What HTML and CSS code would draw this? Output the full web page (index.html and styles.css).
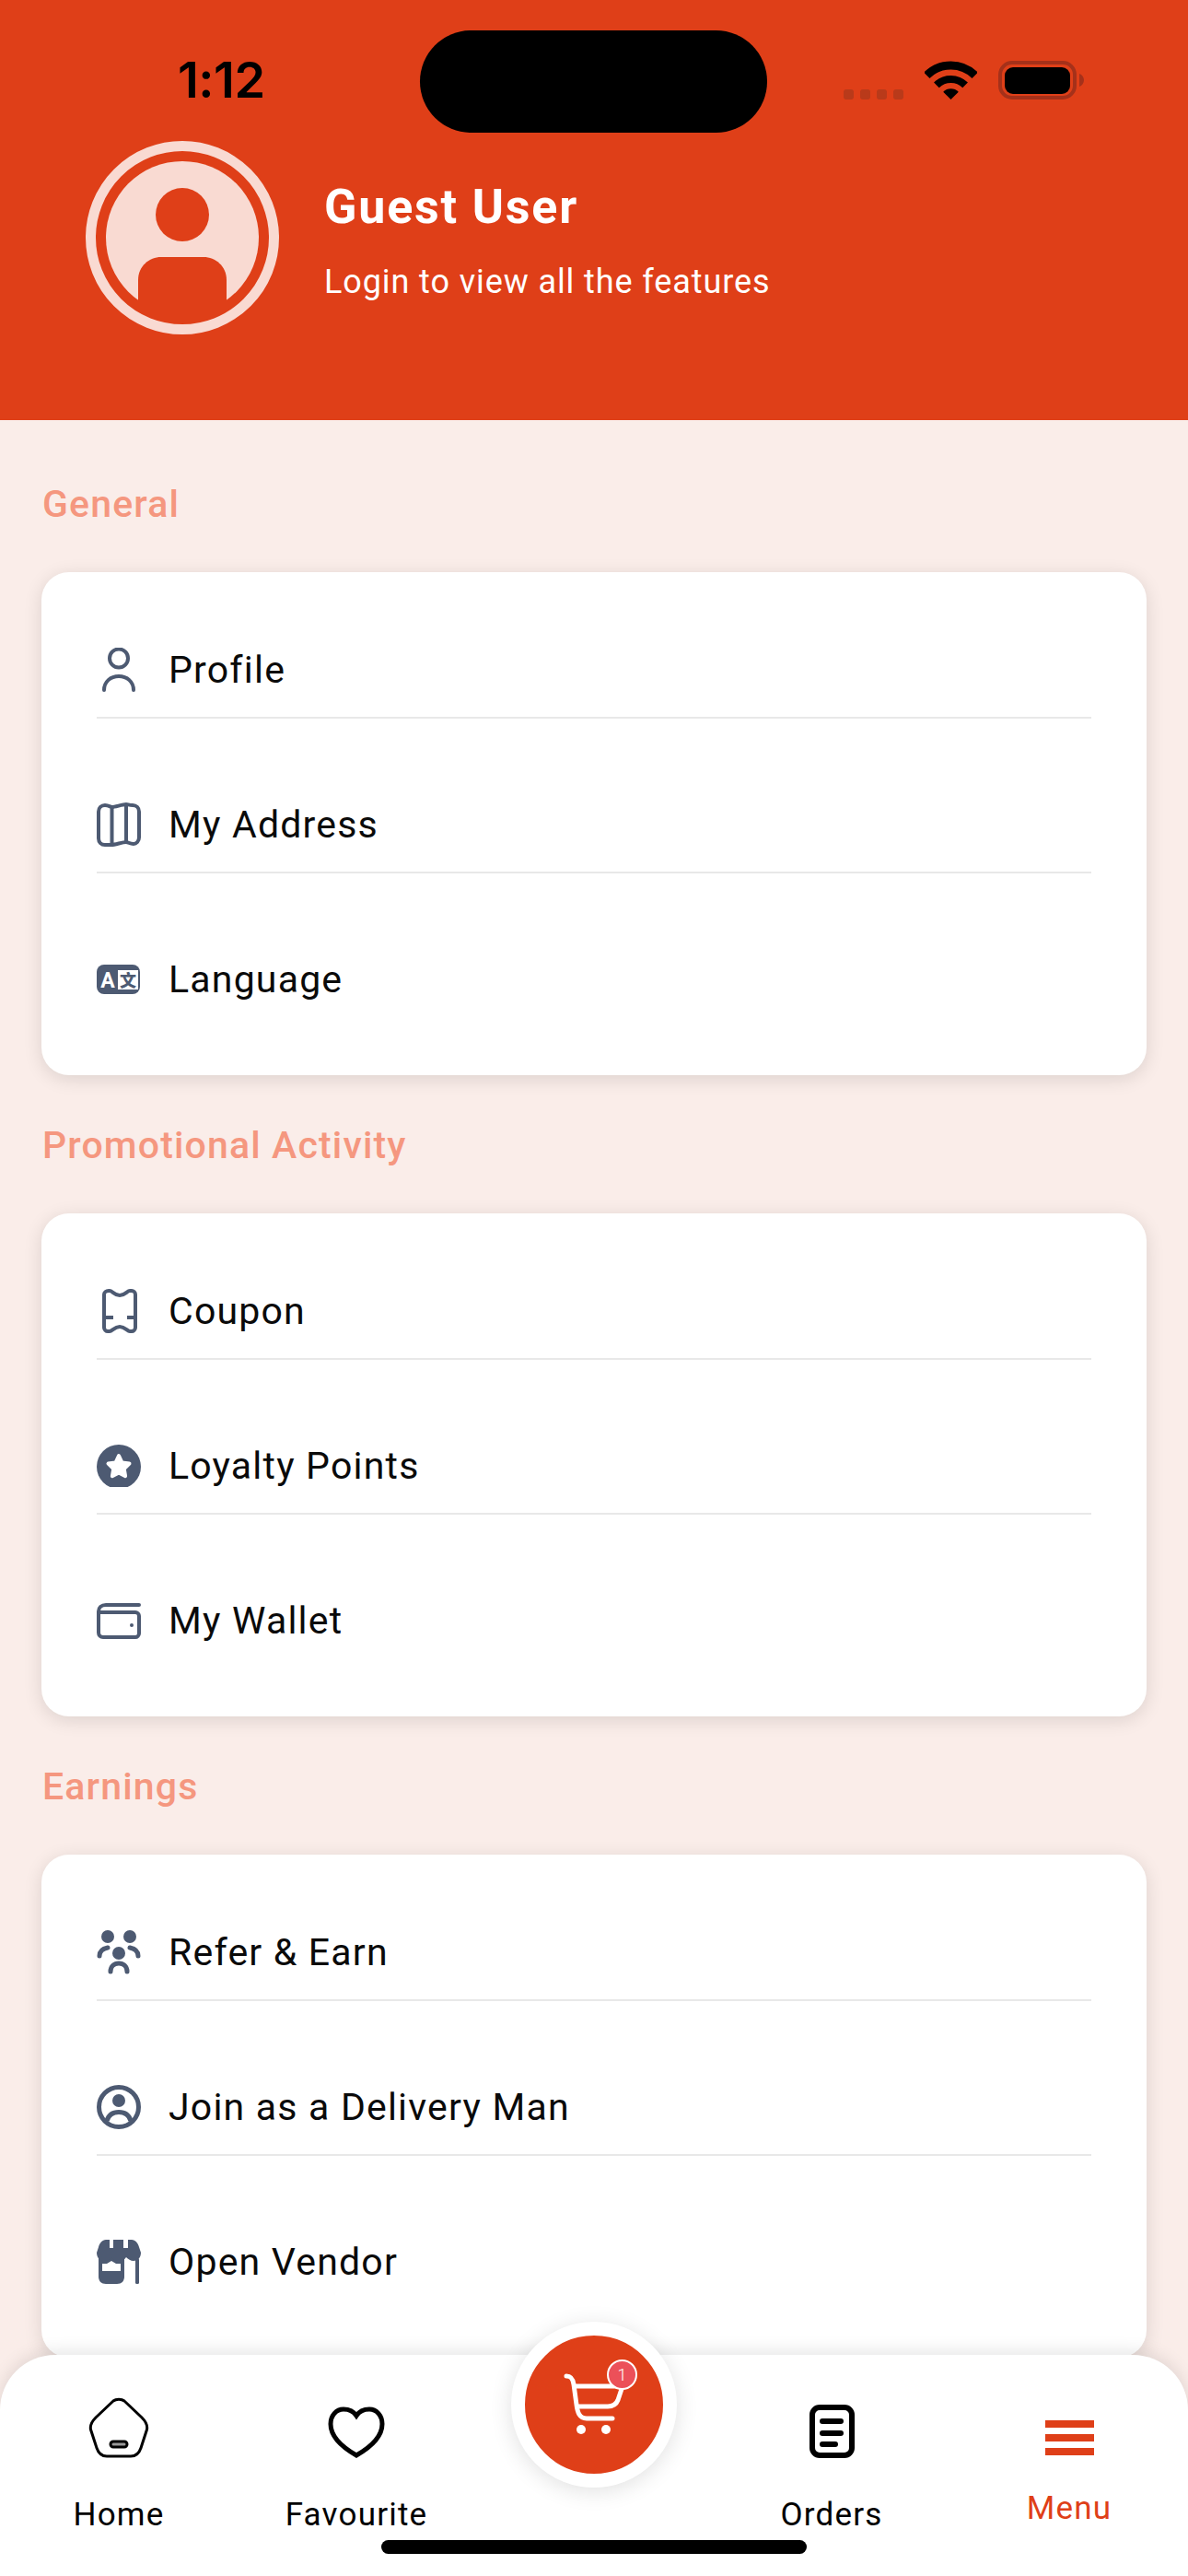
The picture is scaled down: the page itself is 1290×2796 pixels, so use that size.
FILE: index.html
```html
<!DOCTYPE html>
<html lang="en">
<head>
  <meta charset="UTF-8" />
  <meta name="viewport" content="width=device-width, initial-scale=1.0" />
  <title>Menu</title>
  <link rel="stylesheet" href="styles.css">
</head>
<body>

  <!-- Header -->
  <header class="header">
    <div class="status-bar">
      <span class="time">1:12</span>
      <div class="island"></div>
      <div class="status-icons">
        <div class="signal"><i></i><i></i><i></i><i></i></div>
        <svg class="wifi" width="57" height="42" viewBox="0 0 57 42">
          <path d="M2.3 15.8A37 37 0 0 1 54.7 15.8" fill="none" stroke="#000" stroke-width="9" />
          <path d="M12.9 26.4A22 22 0 0 1 44.1 26.4" fill="none" stroke="#000" stroke-width="8" />
          <path d="M28.5 42L20.2 33.7A11.7 11.7 0 0 1 36.8 33.7Z" />
        </svg>
        <svg class="battery" width="94" height="42" viewBox="0 0 94 42">
          <rect x="2" y="2" width="81" height="38" rx="13" fill="none" stroke="#A5311A" stroke-width="4" />
          <rect x="7" y="7" width="71" height="29" rx="9" />
          <path d="M88 14C91 15 93 18 93 21S91 27 88 28Z" fill="#A5311A" />
        </svg>
      </div>
    </div>

    <div class="profile">
      <svg class="avatar" width="210" height="210" viewBox="0 0 210 210">
        <circle cx="105" cy="105" r="83" fill="#F9DAD2" />
        <circle cx="105" cy="80" r="29" fill="#DF3F18" />
        <path d="M57 196V151C57 136 69 126 82 126H128C141 126 153 136 153 151V196Z" fill="#DF3F18" />
        <circle cx="105" cy="105" r="99.5" fill="none" stroke="#F9DAD2" stroke-width="11" />
      </svg>
      <div class="profile-text">
        <div class="profile-name">Guest User</div>
        <div class="profile-sub">Login to view all the features</div>
      </div>
    </div>
  </header>

  <main class="content">
    <!-- General -->
    <h2 class="section-title">General</h2>
    <section class="card">
      <div class="row">
        <svg class="icon" width="48" height="48" viewBox="0 0 48 48" fill="none" stroke="#4D5A72" stroke-width="4" stroke-linecap="round">
          <circle cx="24" cy="11.5" r="10" />
          <path d="M8 46C8 37 15 31 24 31S40 37 40 46" />
        </svg>
        <span>Profile</span>
      </div>
      <div class="row">
        <svg class="icon" width="48" height="48" viewBox="0 0 48 48" fill="none" stroke="#4D5A72" stroke-width="4" stroke-linejoin="round">
          <path d="M9 3C13 3 15 5 16.5 5C20 5 28 2 32 2C34 2 35 3 39 3C43 3 46 6 46 10V38C46 42 43 45 40 45C36 45 34 43 32 43C28 43 20 46 16 46H9C5 46 2 43 2 39V10C2 6 5 3 9 3Z" />
          <path d="M16.5 5V46M32 2V43" />
        </svg>
        <span>My Address</span>
      </div>
      <div class="row row-last">
        <svg class="icon" width="48" height="32" viewBox="0 0 48 32">
          <rect width="47" height="32" rx="8" fill="#4D5A72" />
          <rect x="23" y="6" width="22" height="21" fill="#fff" />
          <text class="lang-a" x="12" y="25">A</text>
          <text class="lang-b" x="34" y="23.5">文</text>
        </svg>
        <span>Language</span>
      </div>
    </section>

    <!-- Promotional Activity -->
    <h2 class="section-title">Promotional Activity</h2>
    <section class="card">
      <div class="row">
        <svg class="icon" width="48" height="48" viewBox="0 0 48 48" fill="none" stroke="#4D5A72" stroke-width="4">
          <path d="M13 2H14C17 2 19 7 25 7C31 7 33 2 36 2H38C40 2 42 4 42 6V42C42 44 40 46 38 46H36C33 46 31 41 25 41C19 41 17 46 14 46H12C10 46 8 44 8 42V6C8 4 10 2 13 2Z" />
          <path d="M8 31H18M33 31H42" />
        </svg>
        <span>Coupon</span>
      </div>
      <div class="row">
        <svg class="icon" width="48" height="46" viewBox="0 0 48 46">
          <circle cx="24" cy="24" r="24" fill="#4D5A72" />
          <path d="M24 12L27.5 19.5L35.5 20.6L29.7 26.2L31.1 34.2L24 30.4L16.9 34.2L18.3 26.2L12.5 20.6L20.5 19.5Z" fill="#fff" stroke="#fff" stroke-width="4" stroke-linejoin="round" />
        </svg>
        <span>Loyalty Points</span>
      </div>
      <div class="row row-last">
        <svg class="icon" width="48" height="40" viewBox="0 0 48 40" fill="none" stroke="#4D5A72" stroke-width="4" stroke-linecap="round">
          <path d="M46 3H10C5 3 2 6 2 10V33C2 36 4 38 7 38H42C44 38 46 36 46 34V15C46 13 44 11 42 11H3" />
          <circle cx="38" cy="25" r="2" fill="#4D5A72" stroke="none" />
        </svg>
        <span>My Wallet</span>
      </div>
    </section>

    <!-- Earnings -->
    <h2 class="section-title">Earnings</h2>
    <section class="card">
      <div class="row">
        <svg class="icon" width="48" height="48" viewBox="0 0 48 48" fill="none" stroke="#4D5A72" stroke-width="5" stroke-linecap="round">
          <circle cx="12" cy="7" r="7" fill="#4D5A72" stroke="none" />
          <circle cx="36" cy="7" r="7" fill="#4D5A72" stroke="none" />
          <circle cx="24" cy="25" r="7" fill="#4D5A72" stroke="none" />
          <path d="M15 45C15 39 19 36 24 36S33 39 33 45" />
          <path d="M3 28C3 23 7 20 12 19M45 28C45 23 41 20 36 19" />
        </svg>
        <span>Refer &amp; Earn</span>
      </div>
      <div class="row">
        <svg class="icon" width="48" height="48" viewBox="0 0 48 48" fill="none" stroke="#4D5A72">
          <circle cx="24" cy="24" r="21.5" stroke-width="5" />
          <circle cx="24" cy="17" r="7" fill="#4D5A72" stroke="none" />
          <path d="M11 39C13 32 18 29.5 24 29.5S35 32 37 39" stroke-width="5" />
        </svg>
        <span>Join as a Delivery Man</span>
      </div>
      <div class="row row-last">
        <svg class="icon" width="48" height="48" viewBox="0 0 48 48">
          <path d="M2 18H30V40C30 45 27 48 22 48H10C5 48 2 45 2 40Z" fill="#4D5A72" />
          <path d="M10 0H14V9H18V0H29V9H34V0H38C42 0 45 4 46 8L48 14C48 20 44 23 40 23C37 23 34 21 32 19C30 22 27 23 24 23C21 23 18 22 16 19C14 22 11 23 8 23C4 23 0 20 0 14L2 8C3 4 6 0 10 0Z" fill="#4D5A72" />
          <path d="M6 26H11L16 23L21 26H26V34H6Z" fill="#fff" />
          <rect x="42" y="20" width="4" height="28" rx="1.5" fill="#4D5A72" />
        </svg>
        <span>Open Vendor</span>
      </div>
    </section>
  </main>

  <!-- Bottom navigation -->
  <nav class="bottom-nav">
    <div class="nav-item">
      <div class="nav-icon">
        <svg width="66" height="66" viewBox="0 0 66 66" fill="none" stroke="#000" stroke-width="3">
          <path d="M27 4C30 1.5 36 1.5 39 4L58 22C62 26 64.5 30 63.5 35L57 55C55 61 52 64 46 64H20C14 64 11 61 9 55L2.5 35C1.5 30 4 26 8 22Z" />
          <rect x="24" y="48" width="18" height="6" rx="3" fill="#999" />
        </svg>
      </div>
      <span>Home</span>
    </div>
    <div class="nav-item">
      <div class="nav-icon">
        <svg width="62" height="56" viewBox="0 0 62 56" fill="none" stroke="#000" stroke-width="5">
          <path d="M31 10C27 4 21 3 17 3C9 3 3 10 3 19C3 33 17 45 31 53C45 45 59 33 59 19C59 10 53 3 45 3C41 3 35 4 31 10Z" />
        </svg>
      </div>
      <span>Favourite</span>
    </div>
    <div class="nav-item"></div>
    <div class="nav-item">
      <div class="nav-icon">
        <svg width="49" height="58" viewBox="0 0 49 58" fill="none" stroke="#000" stroke-linecap="round">
          <rect x="3" y="3" width="43" height="52" rx="8" stroke-width="6" />
          <path d="M14 18H34M14 31H34M14 43H28" stroke-width="6" />
        </svg>
      </div>
      <span>Orders</span>
    </div>
    <div class="nav-item nav-active">
      <div class="nav-icon">
        <svg width="53" height="38" viewBox="0 0 53 38" fill="#DF3F18">
          <rect width="53" height="8" />
          <rect y="15" width="53" height="8" />
          <rect y="30" width="53" height="8" />
        </svg>
      </div>
      <span>Menu</span>
    </div>

    <!-- Cart button -->
    <div class="cart-btn">
      <svg class="cart-icon" width="100" height="100" viewBox="0 0 100 100" fill="none" stroke="#fff" stroke-width="5" stroke-linecap="round">
        <path d="M15 19C20 19 22 22 23 28L26 50C27 58 29 65 37 65H65" />
        <path d="M24 30H76L71 45C69 50 66 52 60 52H27" />
        <circle cx="31" cy="77" r="5" fill="#fff" stroke="none" />
        <circle cx="58" cy="77" r="5" fill="#fff" stroke="none" />
      </svg>
      <span class="cart-badge">1</span>
    </div>

    <div class="home-bar"></div>
  </nav>

</body>
</html>
```

FILE: styles.css
```css
body {
  margin: 0;
  width: 1290px;
  height: 2796px;
  position: relative;
  overflow: hidden;
  background-color: #faede9;
  font-family: Roboto, 'Liberation Sans', sans-serif;
  color: #0a0a0a;
}

.header {
  height: 456px;
  box-sizing: border-box;
  background-color: #df3f18;
  color: #fff;
}

.status-bar {
  display: flex;
  align-items: center;
  height: 111px;
  padding: 33px 0 0 193px;
}

.time {
  flex: none;
  width: 263px;
  margin-top: -3px;
  font-family: Inter, sans-serif;
  font-size: 54px;
  font-weight: 600;
  letter-spacing: -0.5px;
  line-height: 60px;
  color: #000;
}

.island {
  flex: none;
  width: 377px;
  height: 111px;
  border-radius: 56px;
  background-color: #000;
}

.status-icons {
  display: flex;
  align-items: flex-end;
  gap: 23px;
  height: 42px;
  margin: -3px 0 0 83px;
}

.signal {
  display: flex;
  gap: 7px;
}

.signal i {
  width: 11px;
  height: 11px;
  border-radius: 3px;
  background-color: #b93a1a;
}

.profile {
  display: flex;
  gap: 49px;
  margin-top: 9px;
  padding-left: 93px;
}

.profile-text {
  margin-top: 42px;
}

.profile-name {
  font-size: 52px;
  font-weight: 700;
  line-height: 60px;
  letter-spacing: 1.8px;
}

.profile-sub {
  margin-top: 29px;
  font-size: 36px;
  line-height: 44px;
  letter-spacing: 0.9px;
}

.content {
  padding: 65px 45px 0;
}

.section-title {
  margin: 0 0 49px;
  padding: 1px 0 0 1px;
  font-size: 41px;
  font-weight: 500;
  line-height: 50px;
  letter-spacing: 1.15px;
  color: #f5977f;
}

.card {
  margin-bottom: 50px;
  padding: 51px 60px;
  background-color: #fff;
  border-radius: 30px;
  box-shadow: 0 4px 20px rgba(0, 0, 0, 0.12);
}

.row {
  display: flex;
  align-items: center;
  height: 103px;
  margin-top: 60px;
  padding-top: 3px;
  border-bottom: 2px solid #e8e8e8;
  font-size: 41px;
  letter-spacing: 1.2px;
}

.row:first-child {
  margin-top: 0;
}

.row-last {
  border-bottom: none;
  padding-bottom: 2px;
}

.icon {
  flex: none;
  width: 48px;
  margin-right: 30px;
}

.lang-a {
  font-family: Roboto, sans-serif;
  font-size: 23px;
  font-weight: 700;
  letter-spacing: 0;
  text-anchor: middle;
  fill: #fff;
}

.lang-b {
  font-family: 'Noto Sans CJK SC', sans-serif;
  font-size: 18px;
  font-weight: 900;
  letter-spacing: 0;
  text-anchor: middle;
  fill: #4d5a72;
}

.bottom-nav {
  position: absolute;
  left: 0;
  right: 0;
  bottom: 0;
  display: grid;
  grid-template-columns: repeat(5, 258px);
  height: 240px;
  padding-top: 46px;
  box-sizing: border-box;
  background-color: #fff;
  border-radius: 60px 60px 0 0;
  box-shadow: 0 -4px 18px rgba(0, 0, 0, 0.1);
}

.nav-item {
  display: flex;
  flex-direction: column;
  align-items: center;
  font-size: 35px;
  line-height: 40px;
  letter-spacing: 1.2px;
  color: #000;
}

.nav-icon {
  display: flex;
  align-items: flex-end;
  height: 66px;
  margin-bottom: 42px;
}

.nav-active {
  color: #df3f18;
}

.nav-active .nav-icon {
  margin-bottom: 35px;
}

.nav-active svg {
  margin-bottom: 3px;
}

.cart-btn {
  position: absolute;
  left: 555px;
  top: -36px;
  display: flex;
  align-items: center;
  justify-content: center;
  box-sizing: border-box;
  width: 180px;
  height: 180px;
  border: 15px solid #fff;
  border-radius: 50%;
  background-color: #df3f18;
  box-shadow: 0 4px 24px rgba(0, 0, 0, 0.12);
}

.cart-icon {
  margin-left: 10px;
}

.cart-badge {
  position: absolute;
  left: 89px;
  top: 26px;
  display: flex;
  align-items: center;
  justify-content: center;
  box-sizing: border-box;
  width: 33px;
  height: 33px;
  border: 2.5px solid #fff;
  border-radius: 50%;
  background-color: #ec5059;
  font-size: 18px;
  font-weight: 300;
  color: #fff;
}

.home-bar {
  position: absolute;
  left: 414px;
  bottom: 24px;
  width: 462px;
  height: 15px;
  border-radius: 8px;
  background-color: #000;
}
```
